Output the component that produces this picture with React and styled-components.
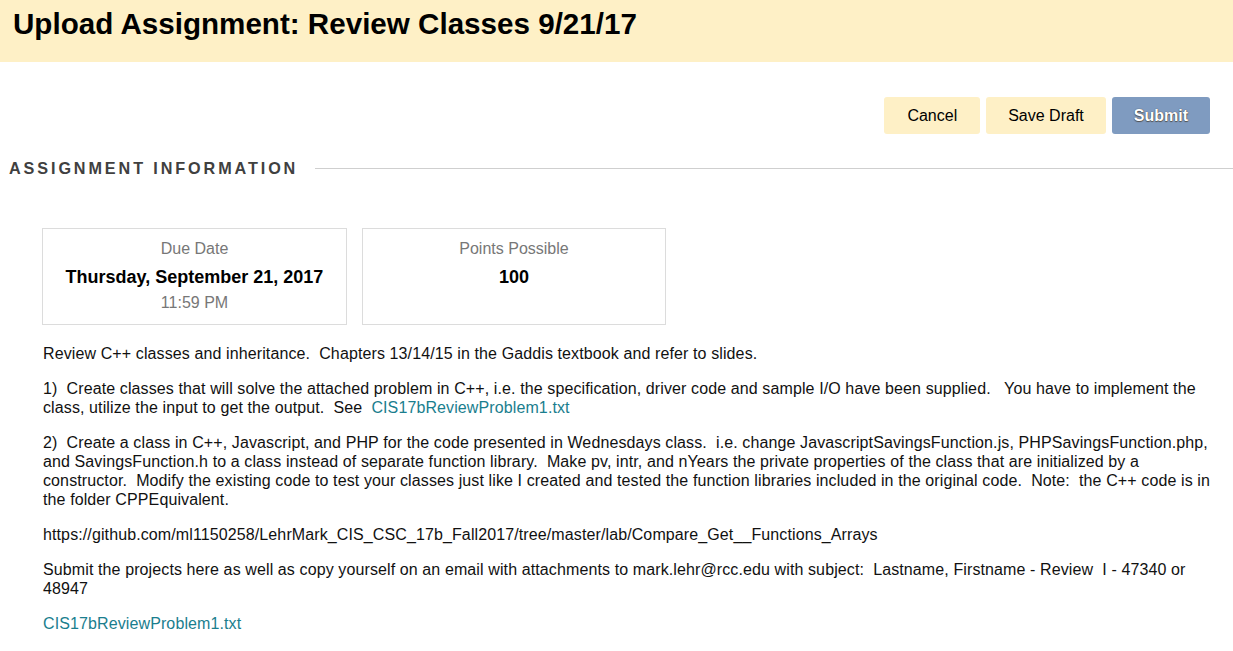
import React from "react";
import styled, { createGlobalStyle } from "styled-components";

const Global = createGlobalStyle`
  html, body { margin: 0; padding: 0; background: #fff; }
  body { font-family: "Liberation Sans", Arial, sans-serif; color: #000; }
`;

const Header = styled.header`
  height: 62px;
  background: #fef0c6;
  padding: 6px 0 0 13px;
  box-sizing: border-box;
`;

const Title = styled.h1`
  margin: 0;
  font-size: 29.6px;
  font-weight: bold;
  line-height: 36px;
  color: #000;
`;

const Actions = styled.div`
  display: flex;
  justify-content: flex-end;
  gap: 6px;
  padding: 35px 23px 0 0;
`;

const Button = styled.button`
  height: 37px;
  padding: 0 ${(p) => p.$px}px;
  border: none;
  border-radius: 3px;
  font-family: "Liberation Sans", Arial, sans-serif;
  font-size: 16px;
  cursor: pointer;
  background: ${(p) => (p.$primary ? "#7f9bc0" : "#fef0c6")};
  color: ${(p) => (p.$primary ? "#fff" : "#000")};
  font-weight: ${(p) => (p.$primary ? "bold" : "normal")};
  text-shadow: ${(p) => (p.$primary ? "0 0 1px #333, 0 1px 1px #555" : "none")};
`;

const SectionHead = styled.div`
  display: flex;
  align-items: center;
  gap: 17px;
  margin-top: 24px;
  padding-left: 9px;
`;

const SectionTitle = styled.h2`
  margin: 0;
  font-size: 16.2px;
  font-weight: bold;
  letter-spacing: 2.9px;
  color: #404040;
  line-height: 20px;
  white-space: nowrap;
`;

const Rule = styled.div`
  flex: 1;
  height: 1px;
  background: #cfcfcf;
`;

const Content = styled.div`
  padding: 50px 20px 0 42px;
`;

const Cards = styled.div`
  display: flex;
  gap: 15px;
`;

const Card = styled.div`
  width: ${(p) => p.$w}px;
  height: 97px;
  box-sizing: border-box;
  border: 1px solid #dcdcdc;
  display: flex;
  flex-direction: column;
  align-items: center;
  padding-top: 10px;
`;

const Label = styled.div`
  font-size: 16px;
  line-height: 20px;
  color: #777;
`;

const Value = styled.div`
  font-size: 18px;
  font-weight: bold;
  line-height: 22px;
  margin-top: 7px;
  color: #000;
`;

const Sub = styled.div`
  font-size: 16px;
  line-height: 20px;
  color: #777;
  margin-top: 5px;
`;

const Body = styled.div`
  padding: 19px 0 0 1px;
`;

const P = styled.p`
  margin: 0 0 16px;
  font-size: 16px;
  line-height: 19px;
  letter-spacing: 0.11px;
  color: #111;
  white-space: pre-wrap;
`;

const Link = styled.a`
  color: #1a7e8e;
  text-decoration: none;
`;

export default function App() {
  return (
    <>
      <Global />
      <Header>
        <Title>Upload Assignment: Review Classes 9/21/17</Title>
      </Header>
      <Actions>
        <Button $px={23}>Cancel</Button>
        <Button $px={22}>Save Draft</Button>
        <Button $px={22} $primary>Submit</Button>
      </Actions>
      <SectionHead>
        <SectionTitle>ASSIGNMENT INFORMATION</SectionTitle>
        <Rule />
      </SectionHead>
      <Content>
        <Cards>
          <Card $w={305}>
            <Label>Due Date</Label>
            <Value>Thursday, September 21, 2017</Value>
            <Sub>11:59 PM</Sub>
          </Card>
          <Card $w={304}>
            <Label>Points Possible</Label>
            <Value>100</Value>
          </Card>
        </Cards>
        <Body>
          <P>{"Review C++ classes and inheritance.  Chapters 13/14/15 in the Gaddis textbook and refer to slides."}</P>
          <P>
            {"1)  Create classes that will solve the attached problem in C++, i.e. the specification, driver code and sample I/O have been supplied.   You have to implement the class, utilize the input to get the output.  See  "}
            <Link href="#">CIS17bReviewProblem1.txt</Link>
          </P>
          <P>{"2)  Create a class in C++, Javascript, and PHP for the code presented in Wednesdays class.  i.e. change JavascriptSavingsFunction.js, PHPSavingsFunction.php, and SavingsFunction.h to a class instead of separate function library.  Make pv, intr, and nYears the private properties of the class that are initialized by a constructor.  Modify the existing code to test your classes just like I created and tested the function libraries included in the original code.  Note:  the C++ code is in the folder CPPEquivalent."}</P>
          <P>{"https://github.com/ml1150258/LehrMark_CIS_CSC_17b_Fall2017/tree/master/lab/Compare_Get__Functions_Arrays"}</P>
          <P>{"Submit the projects here as well as copy yourself on an email with attachments to mark.lehr@rcc.edu with subject:  Lastname, Firstname - Review  I - 47340 or 48947"}</P>
          <P>
            <Link href="#">CIS17bReviewProblem1.txt</Link>
          </P>
        </Body>
      </Content>
    </>
  );
}
